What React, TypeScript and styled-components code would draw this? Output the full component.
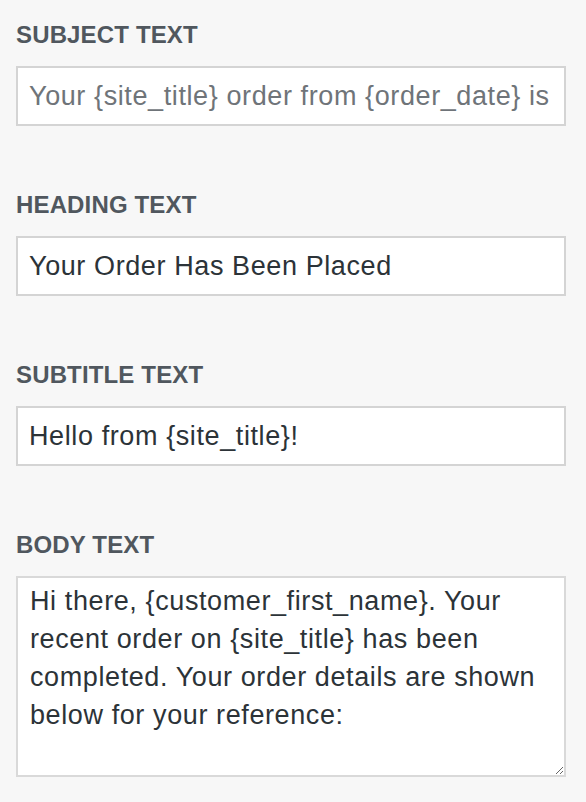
import React from "react";
import styled, { createGlobalStyle } from "styled-components";

const GlobalStyle = createGlobalStyle`
    html, body {
        margin: 0;
        padding: 0;
        background: #f7f7f7;
    }
    * {
        box-sizing: border-box;
    }
`

const Panel = styled.div`
    display: flex;
    flex-direction: column;
    gap: 64px;
    padding: 20px 20px 24px 16px;
    font-family: "Liberation Sans", Arial, sans-serif;
`

const Field = styled.div`
    display: flex;
    flex-direction: column;
    gap: 17px;
`

const Label = styled.label`
    font-size: 24px;
    line-height: 29px;
    font-weight: 700;
    letter-spacing: 0.15px;
    color: #50575e;
    text-transform: uppercase;
`

const TextInput = styled.input`
    width: 100%;
    height: 60px;
    padding: 0 12px 0 11px;
    border: 2px solid #d4d4d4;
    border-radius: 0;
    background: #fff;
    font-family: inherit;
    font-size: 27px;
    letter-spacing: 0.6px;
    color: #2c3338;
    outline: none;

    &::placeholder {
        color: #6f7479;
        opacity: 1;
    }
`

const TextArea = styled.textarea`
    display: block;
    width: 100%;
    height: 201px;
    padding: 4px 12px;
    border: 2px solid #d9d9d9;
    border-radius: 0;
    background: #fff;
    font-family: inherit;
    font-size: 27px;
    letter-spacing: 0.6px;
    line-height: 38px;
    color: #2c3338;
    outline: none;
    resize: vertical;
`

const bodyText =
    "Hi there, {customer_first_name}. Your recent order on {site_title} has been completed. Your order details are shown below for your reference:"

const App = () => {
    return (
        <>
            <GlobalStyle />
            <Panel>
                <Field>
                    <Label>Subject text</Label>
                    <TextInput placeholder="Your {site_title} order from {order_date} is complete" />
                </Field>
                <Field>
                    <Label>Heading text</Label>
                    <TextInput defaultValue="Your Order Has Been Placed" />
                </Field>
                <Field>
                    <Label>Subtitle text</Label>
                    <TextInput defaultValue="Hello from {site_title}!" />
                </Field>
                <Field>
                    <Label>Body text</Label>
                    <TextArea defaultValue={bodyText} />
                </Field>
            </Panel>
        </>
    )
}

export default App
